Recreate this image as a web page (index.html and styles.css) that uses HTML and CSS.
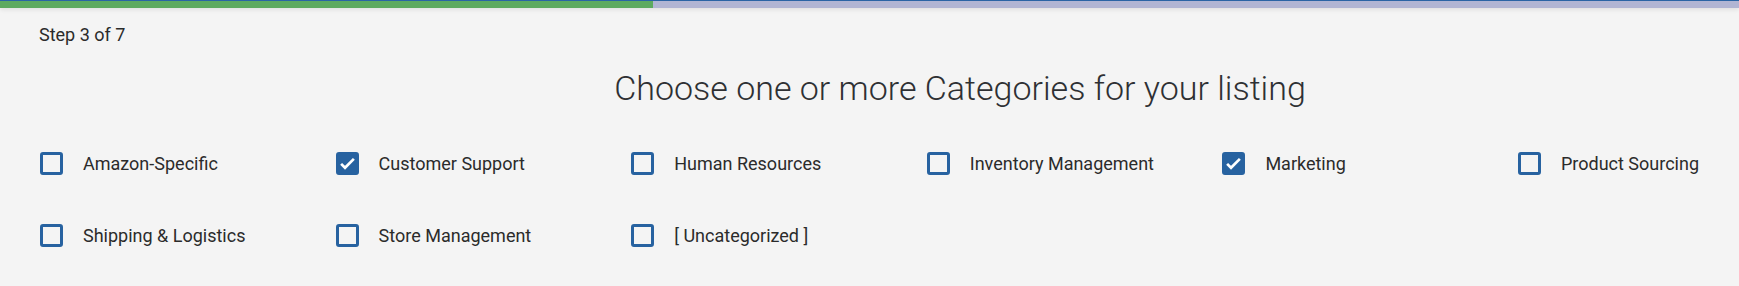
FILE: index.html
```html
<!DOCTYPE html>
<html>
<head>
	<title>Categories</title>
	<meta charset="UTF-8">
	<link rel="stylesheet" href="styles.css">
</head>
<body>
	<div class="progress">
		<div class="progress-done"></div>
		<div class="progress-rest"></div>
	</div>
	<div class="step">Step 3 of 7</div>
	<h2 class="title">Choose one or more Categories for your listing</h2>
	<ul class="cats">
		<li><span class="box"></span>Amazon-Specific</li>
		<li><span class="box checked"><svg viewBox="0 0 24 24"><path d="M3 12.5l5.5 5.5L21 5.5"/></svg></span>Customer Support</li>
		<li><span class="box"></span>Human Resources</li>
		<li><span class="box"></span>Inventory Management</li>
		<li><span class="box checked"><svg viewBox="0 0 24 24"><path d="M3 12.5l5.5 5.5L21 5.5"/></svg></span>Marketing</li>
		<li><span class="box"></span>Product Sourcing</li>
		<li><span class="box"></span>Shipping &amp; Logistics</li>
		<li><span class="box"></span>Store Management</li>
		<li><span class="box"></span>[ Uncategorized ]</li>
	</ul>
</body>
</html>
```

FILE: styles.css
```css
*{
	margin: 0;
	padding: 0;
	box-sizing: border-box;
}
body{
	background: #f4f4f4;
	font-family: Roboto, "Liberation Sans", sans-serif;
	color: #2b2b2b;
	overflow: hidden;
}
ul{
	list-style: none;
}
.progress{
	display: flex;
	height: 8px;
	border-top: 1px solid #2a64a4;
	box-shadow: 0 2px 4px rgba(0,0,0,0.08);
}
.progress-done{
	width: 653px;
	background: #5daa5f;
}
.progress-rest{
	flex: 1;
	background: #b1b5d3;
}
.step{
	padding: 17px 0 0 39px;
	font-size: 18px;
	line-height: 20px;
}
.title{
	margin-top: 23px;
	padding-left: 181px;
	text-align: center;
	font-size: 34px;
	font-weight: 300;
	line-height: 40px;
	color: #2e3033;
}
.cats{
	display: grid;
	grid-template-columns: repeat(6, 295.6px);
	row-gap: 48px;
	margin-top: 43px;
	padding-left: 40px;
}
.cats li{
	display: flex;
	align-items: center;
	height: 24px;
	font-size: 18px;
	white-space: nowrap;
}
.box{
	width: 23px;
	height: 23px;
	margin-right: 20px;
	border: 3px solid #2762a0;
	border-radius: 3px;
	flex-shrink: 0;
}
.box.checked{
	background: #2762a0;
}
.box svg{
	display: block;
	width: 17px;
	height: 17px;
	fill: none;
	stroke: #fff;
	stroke-width: 3.8;
}
```
